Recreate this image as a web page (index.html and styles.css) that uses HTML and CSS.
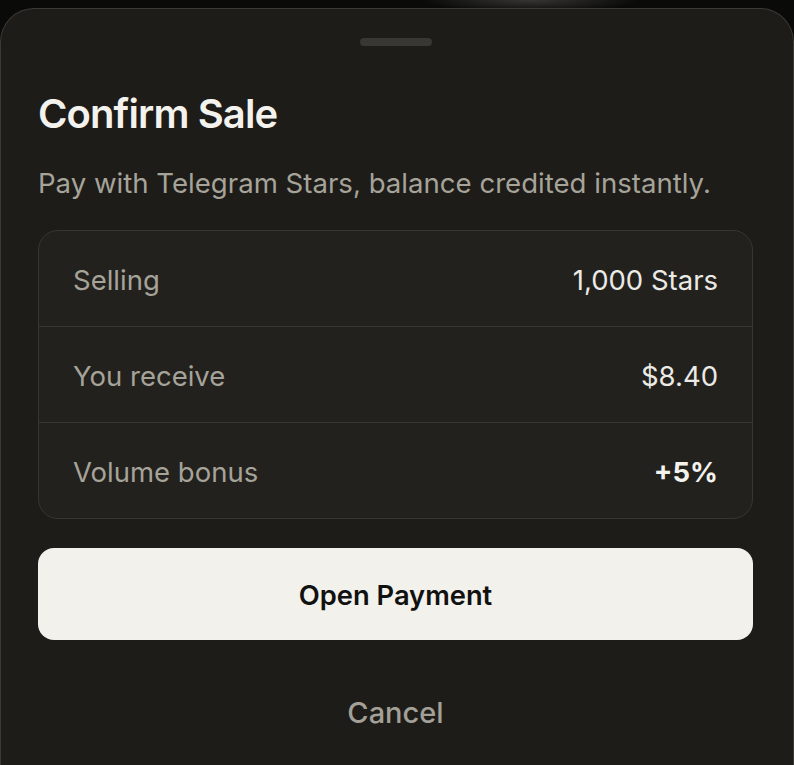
FILE: index.html
```html
<!DOCTYPE html>
<html lang="en">
<head>
<meta charset="utf-8">
<title>Confirm Sale</title>
<link rel="stylesheet" href="styles.css">
</head>
<body>
<div class="backdrop">
  <div class="sheet">
    <div class="handle"></div>
    <h1 class="title">Confirm Sale</h1>
    <p class="subtitle">Pay with Telegram Stars, balance credited instantly.</p>
    <div class="summary">
      <div class="row">
        <span class="label">Selling</span>
        <span class="value">1,000 Stars</span>
      </div>
      <div class="row">
        <span class="label">You receive</span>
        <span class="value">$8.40</span>
      </div>
      <div class="row">
        <span class="label">Volume bonus</span>
        <span class="value value-strong">+5%</span>
      </div>
    </div>
    <button class="primary">Open Payment</button>
    <button class="cancel">Cancel</button>
  </div>
</div>
</body>
</html>
```

FILE: styles.css
```css
html, body {
  margin: 0;
  padding: 0;
  height: 100%;
}

body {
  background: #0a0a09;
  font-family: "Inter", "Noto Sans", sans-serif;
  overflow: hidden;
}

.backdrop {
  height: 100%;
  padding-top: 8px;
  box-sizing: border-box;
  background: radial-gradient(ellipse 110px 12px at 530px 0, #363533 0%, rgba(54,53,51,0) 100%), #0a0a09;
}

.sheet {
  height: 100%;
  box-sizing: border-box;
  background: #1d1c19;
  border: 1px solid #3b3a35;
  border-bottom: none;
  border-radius: 34px 34px 0 0;
  padding: 29px 40px 0 37px;
  display: flex;
  flex-direction: column;
}

.handle {
  width: 72px;
  height: 8px;
  border-radius: 4px;
  background: #383733;
  align-self: center;
  margin-left: 1px;
}

.title {
  margin: 44px 0 0;
  font-size: 40px;
  line-height: 48px;
  font-weight: 600;
  letter-spacing: -0.9px;
  color: #f3f2ed;
}

.subtitle {
  margin: 28px 0 0;
  font-size: 27.6px;
  line-height: 34px;
  font-weight: 400;
  color: #a6a399;
}

.summary {
  margin-top: 30px;
  background: #22211e;
  border: 1px solid #37362f;
  border-radius: 20px;
  display: flex;
  flex-direction: column;
}

.row {
  box-sizing: border-box;
  height: 95px;
  display: flex;
  align-items: center;
  justify-content: space-between;
  padding: 3px 34px 0 34px;
  font-size: 27.5px;
}

.row + .row {
  height: 96px;
  border-top: 1px solid #37362f;
}

.label {
  color: #a6a399;
}

.value {
  color: #ebeae5;
}

.value-strong {
  font-weight: 700;
  color: #f3f2ed;
}

.primary {
  margin-top: 29px;
  height: 92px;
  padding-top: 3px;
  border: none;
  border-radius: 16px;
  background: #f2f1ec;
  color: #111110;
  font-family: inherit;
  font-size: 27.3px;
  font-weight: 600;
  cursor: pointer;
}

.cancel {
  margin-top: 44px;
  height: 56px;
  border: none;
  background: transparent;
  color: #a3a097;
  font-family: inherit;
  font-size: 29px;
  font-weight: 500;
  cursor: pointer;
}
```
